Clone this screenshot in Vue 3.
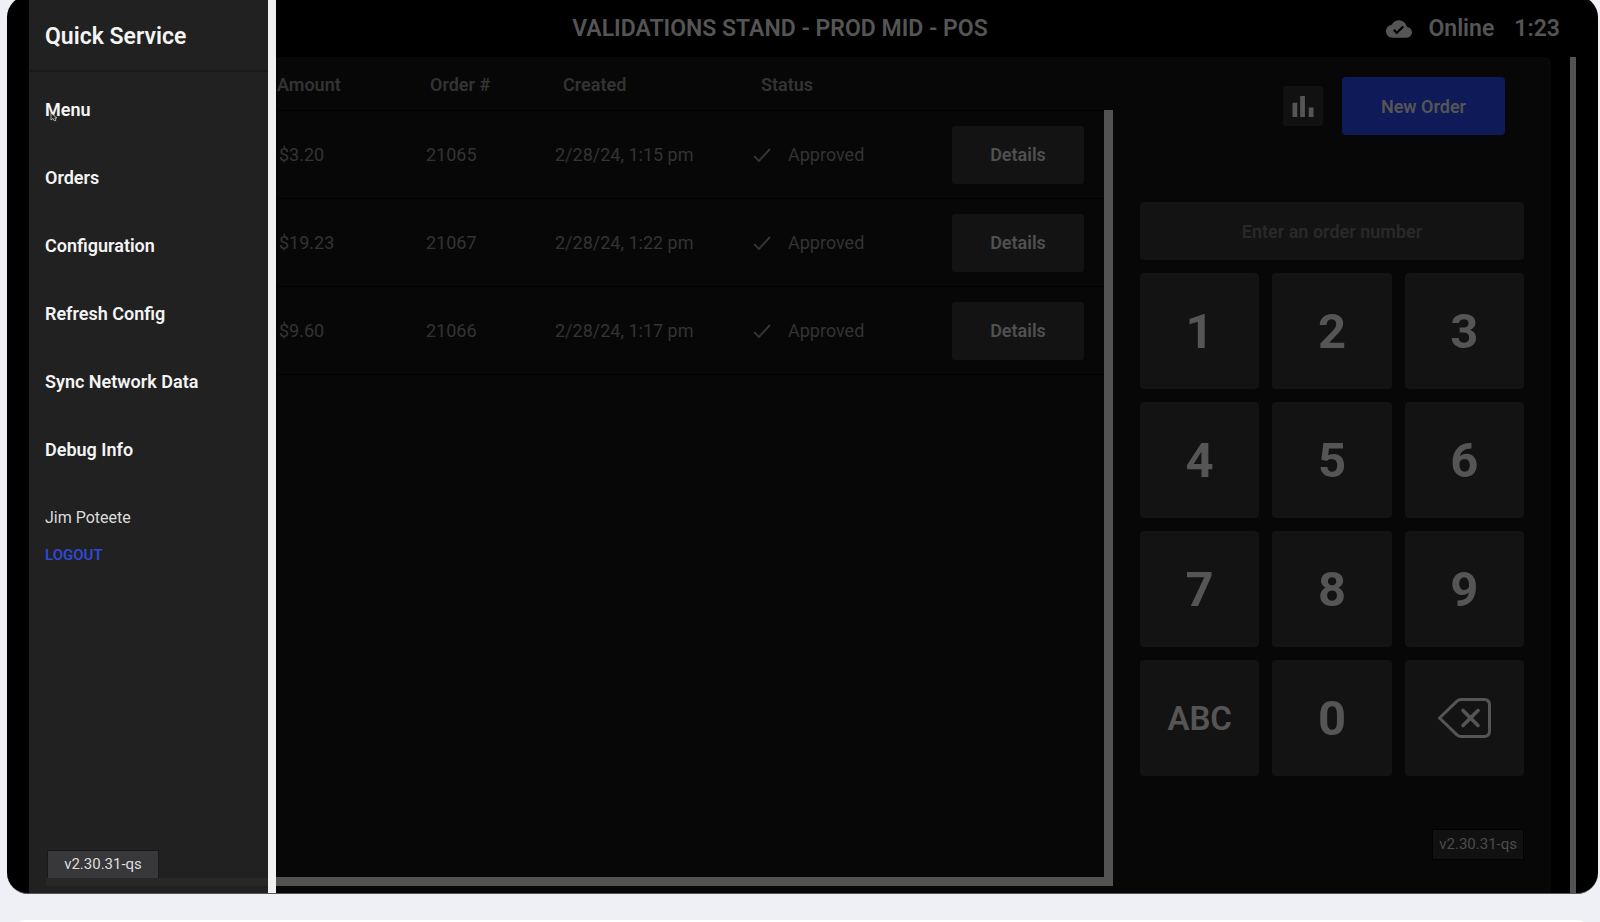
<script setup>
import { ref } from 'vue'

const links = ['Menu', 'Orders', 'Configuration', 'Refresh Config', 'Sync Network Data', 'Debug Info']
const orders = [
  { amount: '$3.20', number: '21065', created: '2/28/24, 1:15 pm' },
  { amount: '$19.23', number: '21067', created: '2/28/24, 1:22 pm' },
  { amount: '$9.60', number: '21066', created: '2/28/24, 1:17 pm' },
]
const digits = ['1', '2', '3', '4', '5', '6', '7', '8', '9']
const version = 'v2.30.31-qs'
const entry = ref('')
</script>

<template>
  <div class="page">
    <div class="frame">
      <aside class="drawer">
        <h1 class="brand">Quick Service</h1>
        <nav class="nav">
          <a v-for="link in links" :key="link" href="#" class="nav-link">{{ link }}</a>
        </nav>
        <p class="user">Jim Poteete</p>
        <button type="button" class="logout">LOGOUT</button>
        <span class="drawer-version">{{ version }}</span>
        <div class="drawer-track"></div>
        <svg class="pointer" viewBox="0 0 8 10" aria-hidden="true">
          <path d="M1 1V8L3 6.5L4.5 9L6 8.2L4.8 6H7Z" fill="#222" stroke="#ccc" stroke-width=".8" />
        </svg>
      </aside>
      <div class="edge"></div>

      <div class="app">
        <header class="topbar">
          <h2 class="title">VALIDATIONS STAND - PROD MID - POS</h2>
          <div class="status">
            <svg class="cloud" viewBox="0 4 24 16" aria-hidden="true">
              <path fill="currentColor" d="M19.35 10.04A7.49 7.49 0 0 0 12 4C9.11 4 6.6 5.64 5.35 8.04A5.994 5.994 0 0 0 0 14c0 3.31 2.69 6 6 6h13c2.76 0 5-2.24 5-5 0-2.64-2.05-4.78-4.65-4.96zM10 17l-3.5-3.5 1.41-1.41L10 14.17l5.18-5.17 1.41 1.41L10 17z" />
            </svg>
            <span>Online</span>
            <time class="clock">1:23</time>
          </div>
        </header>

        <div class="body">
          <main class="orders">
            <table class="table">
              <colgroup>
                <col class="c-amount" /><col class="c-number" /><col class="c-created" /><col class="c-status" /><col />
              </colgroup>
              <thead>
                <tr>
                  <th class="amount">Amount</th>
                  <th>Order #</th>
                  <th>Created</th>
                  <th>Status</th>
                  <th></th>
                </tr>
              </thead>
              <tbody>
                <tr v-for="order in orders" :key="order.number">
                  <td class="amount">{{ order.amount }}</td>
                  <td>{{ order.number }}</td>
                  <td>{{ order.created }}</td>
                  <td>
                    <span class="approved">
                      <svg class="check" viewBox="0 0 18 14" aria-hidden="true">
                        <path d="M1 8L6 13L17 1" fill="none" stroke="currentColor" stroke-width="2" />
                      </svg>
                      Approved
                    </span>
                  </td>
                  <td><button type="button" class="details">Details</button></td>
                </tr>
              </tbody>
            </table>
            <div class="v-scroll"></div>
            <div class="h-scroll"></div>
          </main>

          <section class="panel">
            <div class="actions">
              <button type="button" class="chart" aria-label="Reports">
                <svg viewBox="0 0 22 22" aria-hidden="true">
                  <path fill="currentColor" d="M0 7H5V22H0ZM8 0H13V22H8ZM17 12H22V22H17Z" />
                </svg>
              </button>
              <button type="button" class="new-order">New Order</button>
            </div>
            <input v-model="entry" class="entry" type="text" placeholder="Enter an order number" aria-label="Order number" />
            <div class="keypad">
              <button v-for="digit in digits" :key="digit" type="button" class="key">{{ digit }}</button>
              <button type="button" class="key letters">ABC</button>
              <button type="button" class="key">0</button>
              <button type="button" class="key" aria-label="Backspace">
                <svg class="backspace" viewBox="0 0 53 40" fill="none" stroke="currentColor" stroke-width="3" aria-hidden="true">
                  <path d="M1.5 20L19 3.2Q21 1.5 23 1.5H46Q51.5 1.5 51.5 7V33Q51.5 38.5 46 38.5H23Q21 38.5 19 36.8Z" stroke-linejoin="round" />
                  <path d="M25 12.5L40 27.5M40 12.5L25 27.5" stroke-width="3.6" stroke-linecap="round" />
                </svg>
              </button>
            </div>
            <span class="panel-version">{{ version }}</span>
          </section>
          <div class="page-scroll"></div>
        </div>
      </div>
    </div>
    <div class="next-card"></div>
  </div>
</template>

<style>
body {
  margin: 0;
}
</style>

<style scoped>
.page {
  display: flex;
  flex-direction: column;
  height: 100vh;
  overflow: hidden;
  box-sizing: border-box;
  background: #eff0f5;
  font-family: Roboto, "Liberation Sans", sans-serif;
}
.page * {
  box-sizing: border-box;
}
button,
input {
  font-family: inherit;
  border: 0;
  padding: 0;
}
.frame {
  flex: 1;
  min-height: 0;
  display: flex;
  margin: -4px 2px 26px 7px;
  padding: 4px 0 0 22px;
  border-radius: 21px;
  border-bottom: 1px solid #555;
  background: #000;
  overflow: hidden;
}
.drawer {
  position: relative;
  flex: 0 0 239px;
  display: flex;
  flex-direction: column;
  align-items: flex-start;
  background: #212121;
  color: #f4f4f4;
}
.brand {
  width: 100%;
  height: 72px;
  margin: 0;
  padding: 2px 0 0 16px;
  border-bottom: 2px solid #191919;
  font-size: 23px;
  font-weight: 600;
  line-height: 70px;
}
.nav {
  display: flex;
  flex-direction: column;
  width: 100%;
  padding-top: 4px;
}
.nav-link {
  padding-left: 16px;
  color: inherit;
  font-size: 18px;
  font-weight: 600;
  line-height: 68px;
  text-decoration: none;
}
.user {
  margin: 22px 0 0 16px;
  color: #dcdcdc;
  font-size: 16px;
  line-height: 24px;
}
.logout {
  margin: 14px 0 0 16px;
  background: none;
  color: #3048d4;
  font-size: 15px;
  font-weight: 600;
  line-height: 22px;
}
.drawer-version {
  width: 110px;
  margin: auto 0 0 19px;
  background: #38383a;
  outline: 1px solid #191919;
  color: #dedede;
  font-size: 15px;
  line-height: 27px;
  text-align: center;
}
.drawer-track {
  position: relative;
  align-self: stretch;
  height: 8px;
  margin: 0 0 7px 17px;
  background: #282828;
}
.pointer {
  position: absolute;
  left: 21px;
  top: 112px;
  width: 8px;
  height: 10px;
}
.edge {
  flex: 0 0 8px;
  margin-bottom: -1px;
  background: #f1f1f1;
}
.app {
  flex: 1;
  min-width: 0;
  display: flex;
  flex-direction: column;
}
.topbar {
  flex: 0 0 57px;
  display: flex;
  align-items: center;
  color: #555;
  font-size: 23px;
  font-weight: 600;
}
.title {
  flex: 1;
  margin: 0;
  font-size: 23px;
  font-weight: 600;
  text-align: center;
}
.status {
  flex: 0 0 314px;
  display: flex;
  align-items: center;
  justify-content: flex-end;
  padding-right: 38px;
}
.cloud {
  width: 26px;
  height: 18px;
  margin-right: 16px;
}
.clock {
  margin-left: 20px;
}
.body {
  flex: 1;
  min-height: 0;
  display: flex;
}
.orders {
  flex: 1;
  min-width: 0;
  display: grid;
  grid-template-columns: 1fr 9px;
  grid-template-rows: 53px 1fr 9px;
  padding-bottom: 7px;
  background: #070707;
}
.table {
  grid-column: 1;
  grid-row: 1 / 3;
  align-self: start;
  width: 100%;
  table-layout: fixed;
  border-collapse: separate;
  border-spacing: 0;
  color: #333;
  font-size: 18px;
}
.c-amount {
  width: 150px;
}
.c-number {
  width: 129px;
}
.c-created {
  width: 198px;
}
.c-status {
  width: 199px;
}
.table th {
  height: 54px;
  padding: 1px 0 0 4px;
  border-bottom: 1px solid #010101;
  font-weight: 600;
  text-align: left;
}
.table th:nth-child(3),
.table th:nth-child(4) {
  padding-left: 8px;
}
.table td {
  height: 88px;
  padding: 0;
  border-bottom: 1px solid #010101;
}
.table th.amount {
  padding-left: 1px;
}
.table td.amount {
  padding-left: 3px;
}
.approved {
  display: flex;
  align-items: center;
  gap: 17px;
}
.check {
  width: 18px;
  height: 14px;
}
.details {
  display: block;
  width: 132px;
  height: 58px;
  border-radius: 3px;
  background: #131313;
  color: #505050;
  font-size: 18px;
  font-weight: 600;
}
.v-scroll {
  grid-column: 2;
  grid-row: 2 / 4;
  background: #535353;
}
.h-scroll {
  grid-column: 1;
  grid-row: 3;
  background: #535353;
}
.panel {
  flex: 0 0 438px;
  display: flex;
  flex-direction: column;
  padding: 20px 27px 33px 27px;
  border-radius: 0 5px 0 0;
  background: #070707;
}
.actions {
  display: flex;
  align-items: center;
  justify-content: flex-end;
  gap: 19px;
  padding-right: 19px;
}
.chart {
  display: grid;
  place-items: center;
  width: 40px;
  height: 40px;
  border-radius: 3px;
  background: #111;
  color: #555;
}
.chart svg {
  width: 22px;
  height: 21px;
}
.new-order {
  width: 163px;
  height: 58px;
  border-radius: 4px;
  background: #0f1a58;
  color: #555;
  font-size: 18px;
  font-weight: 600;
}
.entry {
  width: 100%;
  height: 58px;
  margin: 67px 0 13px;
  border-radius: 4px;
  background: #131313;
  color: #555;
  font-size: 18px;
  font-weight: 600;
  text-align: center;
}
.entry::placeholder {
  color: #292929;
  opacity: 1;
}
.keypad {
  display: grid;
  grid-template-columns: repeat(3, 1fr);
  grid-auto-rows: 116px;
  gap: 13px;
}
.key {
  display: grid;
  place-items: center;
  border-radius: 4px;
  background: #131313;
  color: #555;
  font-size: 49px;
  font-weight: 700;
}
.letters {
  font-size: 33px;
  font-weight: 600;
}
.backspace {
  width: 53px;
  height: 40px;
}
.panel-version {
  align-self: flex-end;
  margin-top: auto;
  padding: 0 6px;
  border: 1px solid #010101;
  background: #111;
  color: #4c4c4c;
  font-size: 15px;
  line-height: 29px;
}
.page-scroll {
  flex: 0 0 6px;
  margin: 0 22px 0 19px;
  background: #535353;
}
.next-card {
  flex: 0 0 40px;
  margin: 0 4px -38px 7px;
  border-radius: 20px;
  background: #fff;
}
</style>
